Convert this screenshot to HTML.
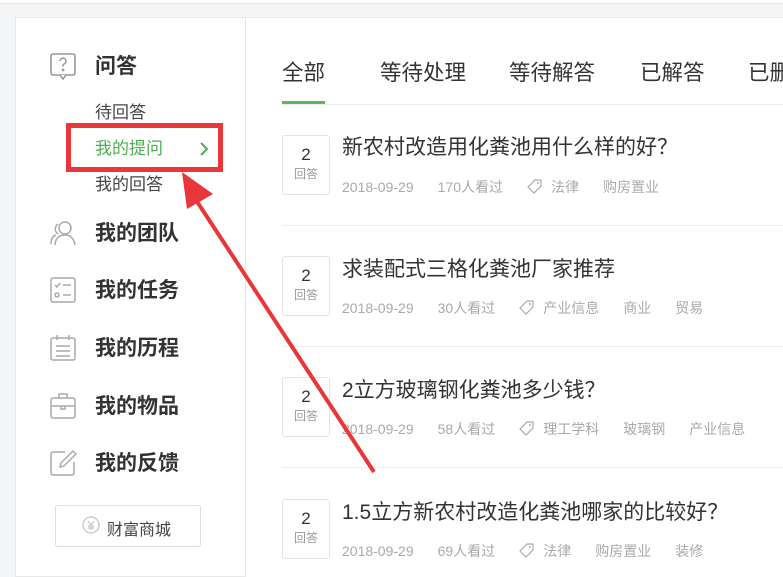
<!DOCTYPE html>
<html><head><meta charset="utf-8"><style>
*{margin:0;padding:0;box-sizing:border-box}
body{width:783px;height:562px;overflow:hidden;background:#f4f5f6;font-family:"Liberation Sans","Noto Sans CJK SC",sans-serif;position:relative;color:#333}
.a{position:absolute;white-space:nowrap}
.top{left:0;top:0;width:783px;height:4px;background:#fff;border-bottom:1px solid #e6e6e6}
.lc{left:15px;top:17px;width:231px;height:560px;background:#fff;border:1px solid #e8e8e8}
.rc{left:246px;top:17px;width:540px;height:560px;background:#fff;border-top:1px solid #e8e8e8}
.m{left:95px;font-size:21px;font-weight:bold;color:#333;line-height:24px}
.s{left:95px;font-size:17px;color:#444;line-height:20px}
.ic{left:49px;width:28px;height:28px}
.tab{top:56px;font-size:21.5px;color:#333}
.qb{left:282px;width:48px;height:60px;border:1px solid #e3e3e3;border-radius:3px;text-align:center;background:#fff}
.qb b{display:block;font-weight:normal;font-size:17px;color:#333;margin-top:9px;line-height:20px}
.qb i{display:block;font-style:normal;font-size:12px;color:#999;line-height:18px}
.qt{left:342px;font-size:21px;color:#333}
.mt{left:342px;font-size:14px;color:#aaa}
.mt span{margin-right:24px;display:inline-block}
.mt svg{vertical-align:-2px;margin-right:8px}
.hr{left:282px;width:501px;height:1px;background:#ececec}
</style></head><body>
<div class="a top"></div>
<div class="a lc"></div>
<div class="a rc"></div>

<svg class="a ic" style="top:52px" viewBox="0 0 28 28" fill="none" stroke="#999" stroke-width="1.6"><rect x="2" y="2" width="24" height="21" rx="2"/><path d="M11 23l3 4 3-4" fill="#fff"/><path d="M11 9a3 3 0 1 1 4 3c-1 .6-1 1.2-1 2.5"/><circle cx="14" cy="18" r=".6" fill="#999"/></svg>
<div class="a m" style="top:55px">问答</div>
<div class="a s" style="top:103px">待回答</div>
<div class="a s" style="top:139px;color:#4caf50">我的提问</div>
<svg class="a" style="left:198px;top:142px" width="12" height="14" viewBox="0 0 12 14" fill="none" stroke="#4caf50" stroke-width="2"><path d="M3 1l6 6-6 6"/></svg>
<div class="a s" style="top:175px">我的回答</div>

<svg class="a ic" style="top:219px" viewBox="0 0 28 28" fill="none" stroke="#aaa" stroke-width="1.5"><circle cx="16" cy="9" r="6"/><path d="M6 26c0-6 4-10 10-10s9 4 10 10"/><path d="M9 5a6 6 0 0 0 0 10M2 25c0-5 2-8 5-9"/></svg>
<div class="a m" style="top:222px">我的团队</div>
<svg class="a ic" style="top:276px" viewBox="0 0 28 28" fill="none" stroke="#aaa" stroke-width="1.5"><rect x="2" y="2" width="24" height="24" rx="2"/><path d="M6 9l2 2 3-4M14 9h8M14 19h8"/><circle cx="8" cy="19" r="2"/></svg>
<div class="a m" style="top:279px">我的任务</div>
<svg class="a ic" style="top:334px" viewBox="0 0 28 28" fill="none" stroke="#aaa" stroke-width="1.5"><rect x="2" y="4" width="24" height="22" rx="2"/><path d="M8 1v5M20 1v5M7 12h14M7 17h14M7 22h14"/></svg>
<div class="a m" style="top:337px">我的历程</div>
<svg class="a ic" style="top:392px" viewBox="0 0 28 28" fill="none" stroke="#aaa" stroke-width="1.5"><rect x="2" y="6" width="24" height="20" rx="2"/><path d="M10 6V2h8v4M2 14h24M12 14v3h4v-3"/></svg>
<div class="a m" style="top:395px">我的物品</div>
<svg class="a ic" style="top:449px" viewBox="0 0 28 28" fill="none" stroke="#aaa" stroke-width="1.5"><path d="M16 3H4a2 2 0 0 0-2 2v19a2 2 0 0 0 2 2h19a2 2 0 0 0 2-2V13"/><path d="M24 2l3 3-12 12-4 1 1-4z"/></svg>
<div class="a m" style="top:452px">我的反馈</div>

<div class="a" style="left:55px;top:505px;width:146px;height:42px;border:1px solid #ddd;border-radius:3px"></div>
<svg class="a" style="left:82px;top:516px" width="18" height="18" viewBox="0 0 18 18" fill="none" stroke="#ccc" stroke-width="1.4"><circle cx="9" cy="9" r="8"/><path d="M6 5l3 4 3-4M9 9v5M6 10h6M6 12h6"/></svg>
<div class="a" style="left:107px;top:516px;font-size:16px;color:#444">财富商城</div>

<div class="a tab" style="left:282px">全部</div>
<div class="a tab" style="left:380px">等待处理</div>
<div class="a tab" style="left:509px">等待解答</div>
<div class="a tab" style="left:640px">已解答</div>
<div class="a tab" style="left:748px">已删除</div>
<div class="a" style="left:282px;top:104px;width:501px;height:1px;background:#ececec"></div>
<div class="a" style="left:282px;top:101px;width:43px;height:3px;background:#5cb85c"></div>

<svg width="0" height="0" style="position:absolute"><defs><symbol id="tg" viewBox="0 0 16 16"><path d="M8 2h6v6l-7 7-6-6z" fill="none" stroke="#aaa" stroke-width="1.2"/><circle cx="11" cy="5" r="1" fill="#aaa"/></symbol></defs></svg>

<div class="a qb" style="top:135px"><b>2</b><i>回答</i></div>
<div class="a qt" style="top:131px">新农村改造用化粪池用什么样的好？</div>
<div class="a mt" style="top:177px"><span>2018-09-29</span><span>170人看过</span><span><svg width="16" height="16"><use href="#tg"/></svg>法律</span><span>购房置业</span></div>
<div class="a hr" style="top:225px"></div>

<div class="a qb" style="top:256px"><b>2</b><i>回答</i></div>
<div class="a qt" style="top:253px">求装配式三格化粪池厂家推荐</div>
<div class="a mt" style="top:298px"><span>2018-09-29</span><span>30人看过</span><span><svg width="16" height="16"><use href="#tg"/></svg>产业信息</span><span>商业</span><span>贸易</span></div>
<div class="a hr" style="top:346px"></div>

<div class="a qb" style="top:377px"><b>2</b><i>回答</i></div>
<div class="a qt" style="top:374px">2立方玻璃钢化粪池多少钱？</div>
<div class="a mt" style="top:419px"><span>2018-09-29</span><span>58人看过</span><span><svg width="16" height="16"><use href="#tg"/></svg>理工学科</span><span>玻璃钢</span><span>产业信息</span></div>
<div class="a hr" style="top:467px"></div>

<div class="a qb" style="top:499px"><b>2</b><i>回答</i></div>
<div class="a qt" style="top:496px">1.5立方新农村改造化粪池哪家的比较好？</div>
<div class="a mt" style="top:541px"><span>2018-09-29</span><span>69人看过</span><span><svg width="16" height="16"><use href="#tg"/></svg>法律</span><span>购房置业</span><span>装修</span></div>

<div class="a" style="left:66px;top:123px;width:157px;height:49px;border:5px solid #e8363b"></div>
<svg class="a" style="left:0;top:0" width="783" height="562"><line x1="374" y1="472" x2="196" y2="200" stroke="#e8363b" stroke-width="4"/><polygon points="182,172 213,194 187,209" fill="#e8363b"/></svg>
</body></html>
